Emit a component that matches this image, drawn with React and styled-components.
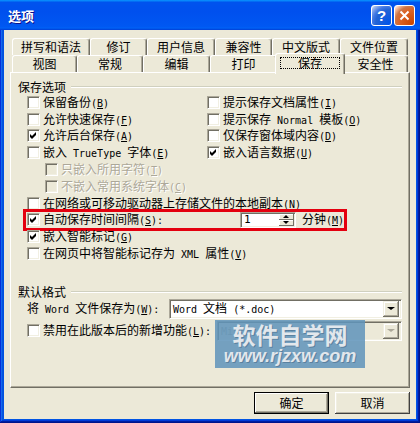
import React from 'react';
import styled, { createGlobalStyle, css } from 'styled-components';

const GlobalStyle = createGlobalStyle`
  html, body {
    margin: 0;
    padding: 0;
    background: #0054e3;
  }
  body {
    font-family: "Noto Sans CJK SC", sans-serif;
    font-size: 12px;
  }
`;

const Window = styled.div`
  width: 420px;
  height: 423px;
  display: flex;
  flex-direction: column;
  background: #0054e3;
  box-shadow: inset -1px -1px #00138c, inset 1px 1px #0831d9, inset -2px -2px #001ea0,
    inset 2px 2px #166aee, inset -3px -3px #003bda, inset 3px 3px #0855dd;
  overflow: hidden;
`;

const TitleBar = styled.div`
  height: 30px;
  flex: none;
  display: flex;
  align-items: center;
  gap: 2px;
  padding: 0 5px 0 8px;
  background: linear-gradient(180deg, #0997ff, #0053ee 8%, #0050ee 40%, #0058f2 88%, #0060f6 93%, #0055e8 96%, #003dd7);
`;

const Title = styled.div`
  flex: 1;
  color: #fff;
  font-weight: bold;
  font-size: 13px;
  line-height: 1;
  text-shadow: 1px 1px #0f1089;
`;

const CaptionButton = styled.div`
  width: 21px;
  height: 21px;
  box-sizing: border-box;
  border: 1px solid #fff;
  border-radius: 3px;
  display: flex;
  align-items: center;
  justify-content: center;
  color: #fff;
  font: bold 15px "Liberation Sans", sans-serif;
  background: ${p =>
    p.$close
      ? 'radial-gradient(circle at 90% 90%, #cc4600 0%, #dc6527 55%, #cd7546 70%, #ffccb2 90%, #fff 100%)'
      : 'radial-gradient(circle at 90% 90%, #0054e9 0%, #2263d5 55%, #4479e4 70%, #a3bbec 90%, #fff 100%)'};
`;

const Frame = styled.div`
  flex: 1;
  display: flex;
  padding: 0 4px 4px;
`;

const Client = styled.div`
  flex: 1;
  display: flex;
  flex-direction: column;
  background: #ece9d8;
  padding: 8px 6px 5px;
`;

const TabStrip = styled.div`
  padding: 0 2px;
`;

const TabRow = styled.div`
  display: flex;
  height: 17px;
`;

const Tab = styled.div`
  flex: 0 0 ${p => p.$w}px;
  box-sizing: border-box;
  height: 17px;
  display: flex;
  align-items: center;
  justify-content: center;
  line-height: 1;
  background: #ece9d8;
  border-top: 1px solid #fff;
  border-left: 1px solid #fff;
  border-right: 1px solid #716f64;
  box-shadow: inset -1px 0 #aca899;
  border-radius: 3px 3px 0 0;
  ${p =>
    p.$active &&
    css`
      position: relative;
      z-index: 1;
      flex-basis: ${p.$w + 4}px;
      height: 21px;
      margin: -2px -2px -2px;
      padding-bottom: 2px;
    `}
`;

const Focus = styled.span`
  border: 1px dotted #000;
  padding: 0 17px;
  line-height: 10px;
`;

const Panel = styled.div`
  position: relative;
  height: 316px;
  box-sizing: border-box;
  border: 1px solid;
  border-color: #fff #716f64 #716f64 #fff;
  box-shadow: inset -1px -1px #aca899;
  padding: 7px 7px 0 7px;
`;

const GroupHead = styled.div`
  display: flex;
  align-items: center;
  height: 14px;
  line-height: 1;
  margin-top: ${p => p.$gap || 0}px;
  &::after {
    content: "";
    flex: 1;
    margin-left: 5px;
    border-top: 1px solid #d0d0bf;
    border-bottom: 1px solid #fff;
  }
`;

const Options = styled.div`
  display: flex;
  flex-direction: column;
  padding-left: 9px;
`;

const Pair = styled.div`
  display: grid;
  grid-template-columns: 180px 1fr;
`;

const Option = styled.div`
  display: flex;
  align-items: center;
  gap: 3px;
  height: 16.8px;
  line-height: 1;
  white-space: nowrap;
  padding-left: ${p => (p.$indent ? 18 : 0)}px;
  color: ${p => (p.$disabled ? '#aca899' : '#000')};
  text-shadow: ${p => (p.$disabled ? '1px 1px #fff' : 'none')};
  ${p =>
    p.$marked &&
    css`
      width: 318px;
      box-sizing: border-box;
      margin-left: -1px;
      padding-left: 1px;
      outline: 3px solid #e4000f;
    `}
`;

const Box = styled.span`
  flex: none;
  width: 13px;
  height: 13px;
  box-sizing: border-box;
  border: 1px solid;
  border-color: #aca899 #fff #fff #aca899;
  box-shadow: inset 1px 1px #716f64, inset -1px -1px #f1efe2;
  background: ${p => (p.$disabled ? '#ece9d8' : '#fff')};
  display: flex;
`;

const Text = styled.span`
  width: ${p => (p.$w ? `${p.$w}px` : 'auto')};
`;

const Latin = styled.span`
  font-family: "DejaVu Sans Mono", monospace;
  font-size: 10px;
  white-space: pre;
`;

const SpinBox = styled.div`
  width: 56px;
  height: 16px;
  box-sizing: border-box;
  display: flex;
  margin-right: 3px;
  border: 1px solid;
  border-color: #aca899 #fff #fff #aca899;
  box-shadow: inset 1px 1px #716f64, inset -1px -1px #f1efe2;
  background: #fff;
  padding: 2px 2px 2px 3px;
`;

const SpinValue = styled.span`
  flex: 1;
  display: flex;
  align-items: center;
  font-family: "DejaVu Sans Mono", monospace;
  font-size: 11px;
`;

const SpinButtons = styled.div`
  width: 15px;
  display: flex;
  flex-direction: column;
  margin: -1px -1px -1px 0;
`;

const SpinHalf = styled.div`
  flex: 1;
  display: flex;
  align-items: center;
  justify-content: center;
  background: #ece9d8;
  box-shadow: inset -1px -1px #716f64, inset 1px 1px #fff;
`;

const Arrow = styled.span`
  width: 0;
  height: 0;
  border-left: ${p => p.$size}px solid transparent;
  border-right: ${p => p.$size}px solid transparent;
  ${p => (p.$up ? 'border-bottom' : 'border-top')}: ${p => Math.ceil(p.$size * 0.75)}px solid
    ${p => (p.$disabled ? '#aca899' : '#000')};
`;

const FieldRow = styled.div`
  display: flex;
  align-items: center;
  height: 20px;
  margin-top: ${p => p.$gap || 0}px;
  line-height: 1;
  white-space: nowrap;
  gap: 3px;
`;

const Select = styled.div`
  margin-left: auto;
  width: ${p => p.$w}px;
  height: 20px;
  box-sizing: border-box;
  display: flex;
  align-items: center;
  border: 1px solid;
  border-color: #aca899 #fff #fff #aca899;
  box-shadow: inset 1px 1px #716f64, inset -1px -1px #f1efe2;
  background: ${p => (p.$disabled ? '#ece9d8' : '#fff')};
  color: ${p => (p.$disabled ? '#aca899' : '#000')};
  padding: 2px;
`;

const SelectText = styled.span`
  flex: 1;
  padding-left: 1px;
`;

const DropButton = styled.span`
  width: 16px;
  height: 16px;
  display: flex;
  align-items: center;
  justify-content: center;
  background: #ece9d8;
  box-shadow: inset -1px -1px #716f64, inset 1px 1px #f1efe2, inset -2px -2px #aca899, inset 2px 2px #fff;
`;

const Watermark = styled.div`
  position: absolute;
  left: 204px;
  top: 247px;
  width: 150px;
  height: 48px;
  background: rgba(96, 148, 186, 0.86);
  display: flex;
  flex-direction: column;
  align-items: center;
  justify-content: center;
  color: #e2e7ec;
  text-shadow: 1px 1px rgba(60, 90, 120, 0.45);
`;

const WmTitle = styled.span`
  font-size: 23px;
  font-weight: bold;
  line-height: 24px;
`;

const WmUrl = styled.span`
  font: italic bold 18px "Liberation Sans", sans-serif;
  line-height: 20px;
`;

const ButtonBar = styled.div`
  display: flex;
  justify-content: flex-end;
  gap: 6px;
  margin-top: 4px;
`;

const Button = styled.div`
  width: 75px;
  height: 22px;
  box-sizing: border-box;
  display: flex;
  align-items: center;
  justify-content: center;
  line-height: 1;
  background: #ece9d8;
  ${p =>
    p.$default
      ? css`
          border: 1px solid #000;
          box-shadow: inset -1px -1px #716f64, inset 1px 1px #fff, inset -2px -2px #aca899;
        `
      : css`
          box-shadow: inset -1px -1px #404040, inset 1px 1px #fff, inset -2px -2px #aca899, inset 2px 2px #f1efe2;
        `}
`;

const Key = ({ k, colon }) => (
  <Latin>
    (<u>{k}</u>){colon ? ':' : ''}
  </Latin>
);

const Check = ({ checked, disabled }) => (
  <Box $disabled={disabled}>
    {checked && (
      <svg width="11" height="11" viewBox="0 0 11 11">
        <polygon points="2,4 4,6 8,2 8,5 4,9 2,7" fill="#000" />
      </svg>
    )}
  </Box>
);

const Opt = ({ checked, disabled, indent, children }) => (
  <Option $disabled={disabled} $indent={indent}>
    <Check checked={checked} disabled={disabled} />
    <Text>{children}</Text>
  </Option>
);

const topTabs = [
  ['拼写和语法', 78],
  ['修订', 57],
  ['用户信息', 68],
  ['兼容性', 57],
  ['中文版式', 68],
  ['文件位置', 68],
];

const bottomTabs = [
  ['视图', 65],
  ['常规', 66],
  ['编辑', 67],
  ['打印', 67],
  ['保存', 66],
  ['安全性', 65],
];

const App = () => (
  <>
    <GlobalStyle />
    <Window>
      <TitleBar>
        <Title>选项</Title>
        <CaptionButton>?</CaptionButton>
        <CaptionButton $close>
          <svg width="11" height="11" viewBox="0 0 11 11">
            <path d="M1.5 1.5 L9.5 9.5 M9.5 1.5 L1.5 9.5" stroke="#fff" strokeWidth="2" />
          </svg>
        </CaptionButton>
      </TitleBar>
      <Frame>
        <Client>
          <TabStrip>
            <TabRow>
              {topTabs.map(([label, w]) => (
                <Tab key={label} $w={w}>{label}</Tab>
              ))}
            </TabRow>
            <TabRow>
              {bottomTabs.map(([label, w]) => (
                <Tab key={label} $w={w} $active={label === '保存'}>
                  {label === '保存' ? <Focus>{label}</Focus> : label}
                </Tab>
              ))}
            </TabRow>
          </TabStrip>
          <Panel>
            <GroupHead>保存选项</GroupHead>
            <Options>
              <Pair>
                <Opt>保留备份<Key k="B" /></Opt>
                <Opt>提示保存文档属性<Key k="I" /></Opt>
              </Pair>
              <Pair>
                <Opt>允许快速保存<Key k="F" /></Opt>
                <Opt>提示保存<Latin> Normal </Latin>模板<Key k="O" /></Opt>
              </Pair>
              <Pair>
                <Opt checked>允许后台保存<Key k="A" /></Opt>
                <Opt>仅保存窗体域内容<Key k="D" /></Opt>
              </Pair>
              <Pair>
                <Opt>嵌入<Latin> TrueType </Latin>字体<Key k="E" /></Opt>
                <Opt checked>嵌入语言数据<Key k="U" /></Opt>
              </Pair>
              <Opt disabled indent>只嵌入所用字符<Key k="T" /></Opt>
              <Opt disabled indent>不嵌入常用系统字体<Key k="C" /></Opt>
              <Opt>在网络或可移动驱动器上存储文件的本地副本<Key k="N" /></Opt>
              <Option $marked>
                <Check checked />
                <Text $w={195}>自动保存时间间隔<Key k="S" colon /></Text>
                <SpinBox>
                  <SpinValue>1</SpinValue>
                  <SpinButtons>
                    <SpinHalf><Arrow $up $size={3} /></SpinHalf>
                    <SpinHalf><Arrow $size={3} /></SpinHalf>
                  </SpinButtons>
                </SpinBox>
                <Text>分钟<Key k="M" /></Text>
              </Option>
              <Opt checked>嵌入智能标记<Key k="G" /></Opt>
              <Opt>在网页中将智能标记存为<Latin> XML </Latin>属性<Key k="V" /></Opt>
            </Options>
            <GroupHead $gap={23}>默认格式</GroupHead>
            <Options>
              <FieldRow>
                <Text>将<Latin> Word </Latin>文件保存为<Key k="W" colon /></Text>
                <Select $w={233}>
                  <SelectText><Latin>Word </Latin>文档<Latin> (*.doc)</Latin></SelectText>
                  <DropButton><Arrow $size={4} /></DropButton>
                </Select>
              </FieldRow>
              <FieldRow $gap={2}>
                <Check />
                <Text>禁用在此版本后的新增功能<Key k="L" colon /></Text>
                <Select $w={185} $disabled>
                  <SelectText><Latin>Microsoft Word 97</Latin></SelectText>
                  <DropButton><Arrow $size={4} $disabled /></DropButton>
                </Select>
              </FieldRow>
            </Options>
            <Watermark>
              <WmTitle>软件自学网</WmTitle>
              <WmUrl>www.rjzxw.com</WmUrl>
            </Watermark>
          </Panel>
          <ButtonBar>
            <Button $default>确定</Button>
            <Button>取消</Button>
          </ButtonBar>
        </Client>
      </Frame>
    </Window>
  </>
);

export default App;
